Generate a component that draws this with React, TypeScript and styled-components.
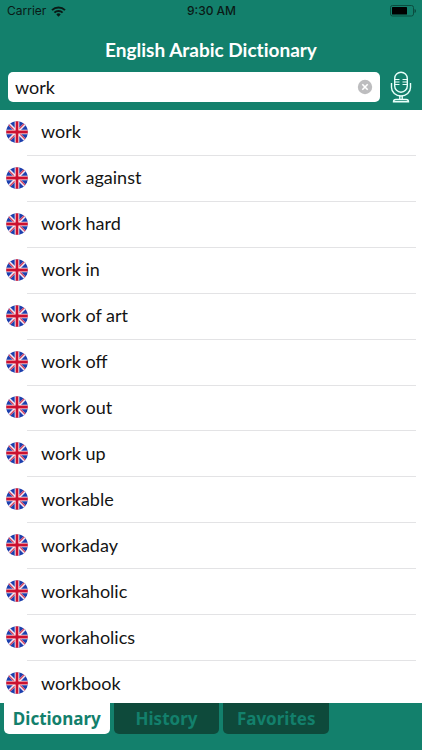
import React, { useState } from "react";
import styled, { createGlobalStyle } from "styled-components";

const GREEN = "#13806c";
const DARK_GREEN = "#0e4a3b";

const GlobalStyle = createGlobalStyle`
  *, *::before, *::after { box-sizing: border-box; }
  body {
    margin: 0;
    background: #fff;
    color: #141414;
    font-family: Lato, "Open Sans", sans-serif;
  }
`;

const Screen = styled.div`
  display: flex;
  flex-direction: column;
  height: 100vh;
  overflow: hidden;
`;

const Header = styled.header`
  flex: none;
  background: ${GREEN};
`;

const StatusBar = styled.div`
  display: grid;
  grid-template-columns: 1fr auto 1fr;
  align-items: center;
  height: 22px;
  padding: 0 6px 0 7px;
  color: #0a1a16;
  font: 400 12px/22px Inter, "Liberation Sans", sans-serif;
`;

const Carrier = styled.span`
  display: flex;
  align-items: center;
  gap: 5px;
`;

const Clock = styled.time`
  font-weight: 500;
`;

const BatteryIcon = styled.svg`
  justify-self: end;
`;

const Title = styled.h1`
  margin: 0;
  padding: 12px 0 5px;
  color: #fff;
  font-size: 19px;
  font-weight: 700;
  font-variant-ligatures: none;
  line-height: 32px;
  text-align: center;
`;

const SearchRow = styled.form`
  display: flex;
  align-items: center;
  gap: 8px;
  padding: 0 8px 7px;
`;

const SearchBox = styled.div`
  display: flex;
  flex: 1;
  align-items: center;
  height: 30px;
  padding: 0 7px;
  border-radius: 5px;
  background: #fff;
`;

const SearchInput = styled.input`
  flex: 1;
  min-width: 0;
  padding: 0;
  border: 0;
  outline: 0;
  background: transparent;
  color: inherit;
  font: 400 18px/28px Lato, sans-serif;
`;

const IconButton = styled.button`
  display: flex;
  flex: none;
  padding: 0;
  border: 0;
  background: transparent;
  cursor: pointer;
`;

const Results = styled.main`
  display: flex;
  flex: 1;
  flex-direction: column;
  min-height: 0;
  overflow: hidden;
`;

const WordList = styled.ul`
  display: grid;
  flex: 1;
  grid-auto-rows: minmax(44px, 1fr);
  margin: 0 0 -4px;
  padding: 0;
  list-style: none;
`;

const WordRow = styled.li`
  display: flex;
  align-items: stretch;
  padding: 0 6px;
`;

const FlagSlot = styled.span`
  display: flex;
  align-items: center;
  width: 21px;
  padding-bottom: 2px;

  svg {
    flex: none;
  }
`;

const WordButton = styled.button`
  flex: 1;
  padding: 0 0 2px 14px;
  border: 0;
  border-bottom: 1px solid #e3e3e5;
  background: transparent;
  color: inherit;
  font: 400 18px/24px Lato, sans-serif;
  text-align: left;
  cursor: pointer;
`;

const TabBar = styled.nav`
  display: flex;
  flex: none;
  align-items: flex-start;
  gap: 4px;
  height: 47px;
  padding: 0 93px 0 4px;
  background: ${GREEN};
`;

const Tab = styled.button<{ $active: boolean }>`
  flex: 1 1 0;
  height: 31px;
  padding: 0;
  border: 0;
  border-radius: 0 0 5px 5px;
  background: ${(p) => (p.$active ? "#fff" : DARK_GREEN)};
  color: ${GREEN};
  font: 700 17px/31px "Noto Sans", sans-serif;
  cursor: pointer;
`;

const WifiIcon = () => (
  <svg width="15" height="11" viewBox="0 0 15 11" fill="none" stroke="#0a1a16" strokeWidth="2" aria-hidden="true">
    <path d="M1 4.1a9.3 9.3 0 0 1 13 0" />
    <path d="M3.4 6.6a5.8 5.8 0 0 1 8.2 0" />
    <path d="M5.3 8.4a3.1 3.1 0 0 1 4.4 0L7.5 10.7z" fill="#0a1a16" stroke="none" />
  </svg>
);

const Battery = () => (
  <BatteryIcon width="26" height="12" viewBox="0 0 26 12" role="img" aria-label="Battery">
    <rect x="0.5" y="0.5" width="23" height="10.5" rx="2" fill="none" stroke="#0b4c3f" />
    <rect x="2" y="2" width="15" height="7.5" rx="0.5" fill="#000" />
    <path d="M24.5 4v4c1-.3 1.5-1 1.5-2s-.5-1.7-1.5-2z" fill="#0b4c3f" />
  </BatteryIcon>
);

const ClearIcon = () => (
  <svg width="16" height="16" viewBox="0 0 16 16" aria-hidden="true">
    <circle cx="8" cy="8" r="7.2" fill="#bdbdbf" />
    <path d="M5.3 5.3l5.4 5.4M10.7 5.3l-5.4 5.4" stroke="#fff" strokeWidth="1.6" />
  </svg>
);

const MicIcon = () => (
  <svg width="26" height="32" viewBox="0 0 26 32" fill="none" stroke="#e8fffa" strokeWidth="1.4" aria-hidden="true">
    <rect x="6.7" y="1.2" width="12.6" height="20" rx="6.3" />
    <path d="M3.5 12v4.5a9.5 8.5 0 0 0 19 0V12" />
    <path d="M7 8.5h4.5M7 11h4.5M7 13.5h4.5M14.5 8.5H19M14.5 11H19M14.5 13.5H19" strokeWidth="1.2" />
    <path d="M11.8 25v3.5M14.2 25v3.5" />
    <path d="M5.5 30.8c0-1.6.8-2.3 2.3-2.3h10.4c1.5 0 2.3.7 2.3 2.3z" />
  </svg>
);

const FlagIcon = () => (
  <svg width="22" height="22" viewBox="0 0 22 22" role="img" aria-label="English">
    <clipPath id="flag-disc">
      <circle cx="11" cy="11" r="10.8" />
    </clipPath>
    <g clipPath="url(#flag-disc)">
      <rect width="22" height="22" fill="#1c3fae" />
      <path d="M0 0l22 22M22 0L0 22" stroke="#f4e6f0" strokeWidth="2.8" />
      <path d="M2 3l8 8M20 19l-8-8M19 2l-8 8M3 20l8-8" stroke="#d8405c" strokeWidth="1.1" />
      <path d="M11 0v22M0 11h22" stroke="#fff" strokeWidth="4.6" />
      <path d="M11 0v22M0 11h22" stroke="#cc1030" strokeWidth="2.8" />
    </g>
  </svg>
);

const WORDS = [
  "work",
  "work against",
  "work hard",
  "work in",
  "work of art",
  "work off",
  "work out",
  "work up",
  "workable",
  "workaday",
  "workaholic",
  "workaholics",
  "workbook",
];

const TABS = ["Dictionary", "History", "Favorites"];

export default function App() {
  const [query, setQuery] = useState("work");
  const [tab, setTab] = useState("Dictionary");

  return (
    <Screen>
      <GlobalStyle />
      <Header>
        <StatusBar>
          <Carrier>
            Carrier <WifiIcon />
          </Carrier>
          <Clock>9:30 AM</Clock>
          <Battery />
        </StatusBar>
        <Title>English Arabic Dictionary</Title>
        <SearchRow onSubmit={(e) => e.preventDefault()}>
          <SearchBox>
            <SearchInput
              type="text"
              aria-label="Search word"
              value={query}
              onChange={(e) => setQuery(e.target.value)}
            />
            <IconButton type="button" aria-label="Clear search" onClick={() => setQuery("")}>
              <ClearIcon />
            </IconButton>
          </SearchBox>
          <IconButton type="button" aria-label="Voice search">
            <MicIcon />
          </IconButton>
        </SearchRow>
      </Header>
      <Results>
        <WordList>
          {WORDS.map((word) => (
            <WordRow key={word}>
              <FlagSlot>
                <FlagIcon />
              </FlagSlot>
              <WordButton type="button">{word}</WordButton>
            </WordRow>
          ))}
        </WordList>
      </Results>
      <TabBar>
        {TABS.map((name) => (
          <Tab
            key={name}
            type="button"
            $active={name === tab}
            aria-pressed={name === tab}
            onClick={() => setTab(name)}
          >
            {name}
          </Tab>
        ))}
      </TabBar>
    </Screen>
  );
}
